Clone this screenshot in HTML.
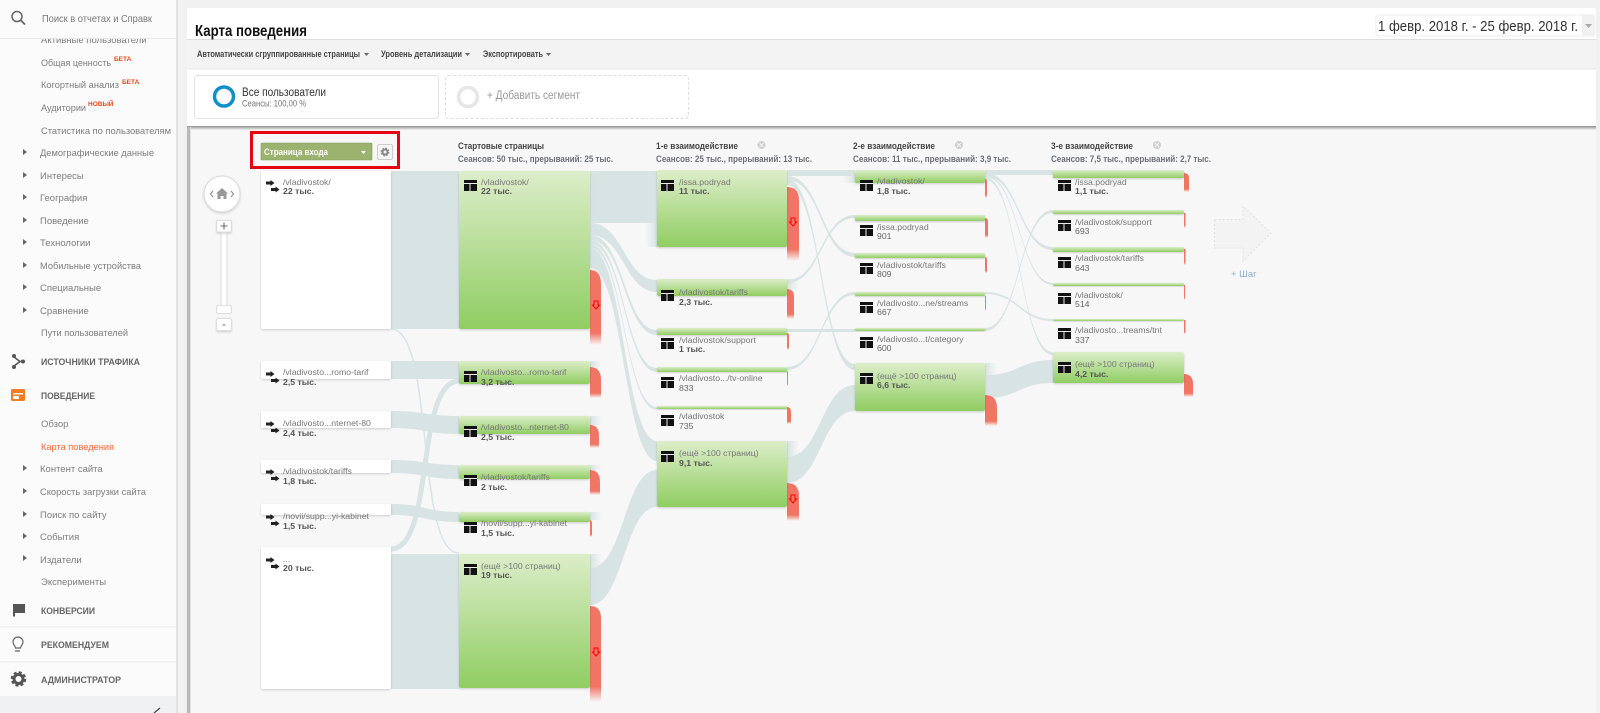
<!DOCTYPE html>
<html lang="ru">
<head>
<meta charset="utf-8">
<title>Карта поведения</title>
<style>
html,body{margin:0;padding:0;background:#f1f1f1;width:1600px;height:713px;overflow:hidden}
svg{display:block;position:absolute;left:0;top:0;font-family:"Liberation Sans","Noto Sans CJK SC",sans-serif;filter:blur(.35px)}
.m{font-size:9.5px;fill:#7d7d7d}
.s{font-size:9.5px;fill:#666;font-weight:bold}
.b{font-size:6.5px;fill:#e64a19;font-weight:bold}
.t{font-size:9px;fill:#444;font-weight:bold}
.h{font-size:9px;fill:#444;font-weight:bold}
.u{font-size:9px;fill:#6b7075;font-weight:bold}
.l{font-size:8.7px;fill:#777}
.v{font-size:8.7px;fill:#555;font-weight:bold}
.n{font-size:8.7px;fill:#666}
.g{fill:url(#gr);filter:url(#sh)}
.w{fill:#fff;filter:url(#sh)}
.f{fill:#d8e3e3}
.r{fill:url(#rd)}
.fr{fill:url(#fr)}
.fl{fill:url(#fl)}
</style>
</head>
<body>
<svg width="1600" height="713" viewBox="0 0 1600 713" xmlns="http://www.w3.org/2000/svg">
<defs>
<linearGradient id="gr" x1="0" y1="0" x2="0" y2="1"><stop offset="0" stop-color="#dcedc9"/><stop offset="1" stop-color="#90cd62"/></linearGradient>
<linearGradient id="rd" x1="0" y1="0" x2="0" y2="1"><stop offset="0" stop-color="#f07564"/><stop offset=".84" stop-color="#f07564"/><stop offset="1" stop-color="#f07564" stop-opacity="0"/></linearGradient>
<linearGradient id="tp" x1="0" y1="0" x2="0" y2="1"><stop offset="0" stop-color="#8f8f8f"/><stop offset="1" stop-color="#f2f2f2"/></linearGradient>
<linearGradient id="fr" x1="0" y1="0" x2="1" y2="0"><stop offset="0" stop-color="#d8e3e3"/><stop offset="1" stop-color="#d8e3e3" stop-opacity="0"/></linearGradient>
<linearGradient id="fl" x1="1" y1="0" x2="0" y2="0"><stop offset="0" stop-color="#d8e3e3"/><stop offset="1" stop-color="#d8e3e3" stop-opacity="0"/></linearGradient>
<filter id="sh" x="-5%" y="-20%" width="110%" height="150%"><feDropShadow dx="0" dy="1" stdDeviation="1" flood-color="#000" flood-opacity=".18"/></filter>
<g id="p"><rect width="13" height="11" fill="#111"/><rect y="3" width="13" height="1" fill="#eee"/><rect x="5.500" y="4" width="1" height="7" fill="#eee"/></g>
<g id="e" fill="#222"><path d="M0 1.500h4.500V0l4 3-4 3V4.500H0z"/><path d="M5 8h4.500V6.500l4 3-4 3V11H5z"/></g>
</defs>

<!-- sidebar -->
<rect x="0" y="0" width="176" height="713" fill="#fbfbfb"/>
<rect x="176" y="0" width="2" height="713" fill="#e2e2e2"/>
<circle cx="17" cy="16.500" r="5" fill="none" stroke="#666" stroke-width="1.500"/><path d="M20.500 20l4.500 4.500" stroke="#666" stroke-width="1.800"/>
<text x="42" y="22" font-size="10.500" fill="#777" textLength="110" lengthAdjust="spacingAndGlyphs">Поиск в отчетах и Справк</text>
<text class="m" x="41" y="43">Активные пользователи</text>
<rect x="0" y="28" width="176" height="10" fill="#fbfbfb"/>
<rect x="0" y="38" width="176" height="1" fill="#e6e6e6"/>
<text class="m" x="41" y="66" textLength="70" lengthAdjust="spacingAndGlyphs">Общая ценность</text><text class="b" x="114" y="61">БЕТА</text>
<text class="m" x="41" y="88" textLength="78" lengthAdjust="spacingAndGlyphs">Когортный анализ</text><text class="b" x="122" y="84">БЕТА</text>
<text class="m" x="41" y="111" textLength="45" lengthAdjust="spacingAndGlyphs">Аудитории</text><text class="b" x="88" y="106">НОВЫЙ</text>
<text class="m" x="41" y="134" textLength="130" lengthAdjust="spacingAndGlyphs">Статистика по пользователям</text>
<g fill="#666"><path d="M23 149l4 3-4 3zM23 172l4 3-4 3zM23 194l4 3-4 3zM23 217l4 3-4 3zM23 239l4 3-4 3zM23 262l4 3-4 3zM23 284l4 3-4 3zM23 307l4 3-4 3zM23 465l4 3-4 3zM23 488l4 3-4 3zM23 511l4 3-4 3zM23 533l4 3-4 3zM23 555l4 3-4 3z"/></g>
<text class="m" x="40" y="156" textLength="114" lengthAdjust="spacingAndGlyphs">Демографические данные</text>
<text class="m" x="40" y="179">Интересы</text>
<text class="m" x="40" y="201">География</text>
<text class="m" x="40" y="224">Поведение</text>
<text class="m" x="40" y="246">Технологии</text>
<text class="m" x="40" y="269" textLength="101" lengthAdjust="spacingAndGlyphs">Мобильные устройства</text>
<text class="m" x="40" y="291">Специальные</text>
<text class="m" x="40" y="314">Сравнение</text>
<text class="m" x="41" y="336" textLength="87" lengthAdjust="spacingAndGlyphs">Пути пользователей</text>
<text class="s" x="41" y="365" textLength="99" lengthAdjust="spacingAndGlyphs">ИСТОЧНИКИ ТРАФИКА</text>
<path d="M14 357l6 4.500-6 4.500M20 361.500h4" fill="none" stroke="#555" stroke-width="1.500"/><circle cx="14" cy="356" r="2" fill="#555"/><circle cx="14" cy="367" r="2" fill="#555"/><circle cx="23" cy="361.500" r="2" fill="#555"/>
<rect x="11" y="389" width="14" height="12" rx="1.500" fill="#f57c1f"/><rect x="13" y="393" width="10" height="1.500" fill="#fff"/><rect x="13" y="396" width="6" height="3" fill="#fff"/>
<text class="s" x="41" y="399" textLength="54" lengthAdjust="spacingAndGlyphs">ПОВЕДЕНИЕ</text>
<text class="m" x="41" y="427">Обзор</text>
<text class="m" x="41" y="450" style="fill:#f4693a" textLength="73" lengthAdjust="spacingAndGlyphs">Карта поведения</text>
<text class="m" x="40" y="472">Контент сайта</text>
<text class="m" x="40" y="495" textLength="106" lengthAdjust="spacingAndGlyphs">Скорость загрузки сайта</text>
<text class="m" x="40" y="518">Поиск по сайту</text>
<text class="m" x="40" y="540">События</text>
<text class="m" x="40" y="563">Издатели</text>
<text class="m" x="41" y="585">Эксперименты</text>
<path d="M13 604h12v9H15v3.500h-2z" fill="#555"/>
<text class="s" x="41" y="614" textLength="54" lengthAdjust="spacingAndGlyphs">КОНВЕРСИИ</text>
<rect x="0" y="626" width="176" height="1.500" fill="#efefef"/>
<path d="M15.500 648c0-2-2.500-3-2.500-6a5 5 0 0 1 10 0c0 3-2.500 4-2.500 6zM15 651h5" fill="none" stroke="#666" stroke-width="1.200"/>
<text class="s" x="41" y="648" textLength="68" lengthAdjust="spacingAndGlyphs">РЕКОМЕНДУЕМ</text>
<rect x="0" y="661" width="176" height="1.500" fill="#efefef"/>
<circle cx="18.500" cy="679" r="4.500" fill="none" stroke="#555" stroke-width="3"/><circle cx="18.500" cy="679" r="6.500" fill="none" stroke="#555" stroke-width="2.500" stroke-dasharray="3 2.100"/>
<text class="s" x="41" y="683" textLength="80" lengthAdjust="spacingAndGlyphs">АДМИНИСТРАТОР</text>
<rect x="0" y="696" width="176" height="17" fill="#eef0f2"/>
<path d="M154 713l6-5" stroke="#444" stroke-width="1.200"/>

<!-- header -->
<rect x="187" y="8" width="1409" height="31" fill="#fff"/>
<rect x="187" y="39" width="1409" height="1" fill="#dedede"/>
<rect x="187" y="40" width="1409" height="29" fill="#f3f3f3"/>
<rect x="187" y="69" width="1409" height="58" fill="#fff"/>
<rect x="187" y="68.500" width="1409" height="1" fill="#e6e6e6"/>
<text x="195" y="36" font-size="16" fill="#111" font-weight="bold" textLength="112" lengthAdjust="spacingAndGlyphs">Карта поведения</text>
<rect x="1376" y="15" width="219" height="21" rx="3" fill="#fff" stroke="#eee"/>
<rect x="1582" y="15" width="13" height="21" fill="#f1f1f1"/>
<path d="M1585 24h7l-3.500 4z" fill="#aaa"/>
<text x="1378" y="31" font-size="14.500" fill="#333" textLength="200" lengthAdjust="spacingAndGlyphs">1 февр. 2018 г. - 25 февр. 2018 г.</text>
<text class="t" x="197" y="57" textLength="163" lengthAdjust="spacingAndGlyphs">Автоматически сгруппированные страницы</text>
<path d="M364 53h5l-2.500 3z" fill="#666"/>
<text class="t" x="381" y="57" textLength="81" lengthAdjust="spacingAndGlyphs">Уровень детализации</text>
<path d="M465 53h5l-2.500 3z" fill="#666"/>
<text class="t" x="483" y="57" textLength="60" lengthAdjust="spacingAndGlyphs">Экспортировать</text>
<path d="M546 53h5l-2.500 3z" fill="#666"/>
<rect x="194.500" y="75.500" width="244" height="43" rx="3" fill="#fff" stroke="#e4e4e4"/>
<circle cx="224" cy="96.500" r="9.500" fill="none" stroke="#0f8fc7" stroke-width="3.500"/>
<text x="242" y="96" font-size="11.500" fill="#333" textLength="84" lengthAdjust="spacingAndGlyphs">Все пользователи</text>
<text x="242" y="106.500" font-size="9" fill="#777" textLength="64" lengthAdjust="spacingAndGlyphs">Сеансы: 100,00 %</text>
<rect x="445.500" y="75.500" width="243" height="43" rx="3" fill="#fff" stroke="#ddd" stroke-dasharray="3 2"/>
<circle cx="468" cy="97" r="9.500" fill="none" stroke="#e6e6e6" stroke-width="3.500"/>
<text x="487" y="99" font-size="11.500" fill="#999" textLength="93" lengthAdjust="spacingAndGlyphs">+ Добавить сегмент</text>

<!-- map area -->
<rect x="187" y="127" width="1409" height="586" fill="#f7f7f7"/>
<rect x="187" y="126" width="1409" height="4" fill="url(#tp)"/>
<rect x="187" y="127" width="3" height="586" fill="#b9b9b9"/>
<rect x="190" y="127" width="1" height="586" fill="#e2e2e2"/>

<!-- flows col0-1 -->
<rect class="f" x="391" y="171" width="68" height="158"/>
<path class="f" d="M391 361H459V379H391Z"/>
<path class="f" d="M391 411C425 411 425 416 459 416V434C425 434 425 428 391 428Z"/>
<path class="f" d="M391 460C425 460 425 465 459 465V479C425 479 425 473 391 473Z"/>
<path class="f" d="M391 504C425 504 425 512 459 512V522C425 522 425 515 391 515Z"/>
<rect class="f" x="391" y="554" width="68" height="135"/>
<path d="M391 549C435 549 415 381 459 381" fill="none" stroke="#d8e3e3" stroke-width="5"/>
<path d="M391 329C435 329 415 553 459 553" fill="none" stroke="#d8e3e3" stroke-width="1.500"/>

<!-- flows col1-2 -->
<rect class="f" x="590" y="171" width="67" height="52"/>
<path class="f" d="M590 223C624 223 624 280 657 280V292C624 292 624 235 590 235Z"/>
<path class="f" d="M590 235C624 235 624 330 657 330V335C624 335 624 240 590 240Z"/>
<path class="f" d="M590 240C624 240 624 368 657 368V372C624 372 624 244 590 244Z"/>
<path class="f" d="M590 244C624 244 624 407 657 407V410C624 410 624 248 590 248Z"/>
<path class="f" d="M590 248C624 248 624 441 657 441V461C624 461 624 268 590 268Z"/>
<path class="f" d="M590 568C624 568 624 470 657 470V507C624 507 624 605 590 605Z"/>

<!-- flows col2-3 -->
<rect class="f" x="787" y="170" width="68" height="6"/>
<path class="f" d="M787 176C821 176 821 253 855 253V257C821 257 821 180 787 180Z"/>
<path class="f" d="M787 179C821 179 821 364 855 364V370C821 370 821 185 787 185Z"/>
<path class="f" d="M787 280C821 280 821 215 855 215V218C821 218 821 283 787 283Z"/>
<path class="f" d="M787 329H855V332H787Z"/>
<path class="f" d="M787 367C821 367 821 292 855 292V295C821 295 821 370 787 370Z"/>
<path class="f" d="M787 457C821 457 821 385 855 385V411C821 411 821 483 787 483Z"/>

<!-- flows col3-4 -->
<rect class="f" x="985" y="170" width="68" height="5"/>
<path class="f" d="M985 173C1019 173 1019 247 1053 247V250C1019 250 1019 176 985 176Z"/>
<path class="f" d="M985 175C1019 175 1019 283 1053 283V285C1019 285 1019 177 985 177Z"/>
<path class="f" d="M985 177C1019 177 1019 352 1053 352V355C1019 355 1019 180 985 180Z"/>
<path class="f" d="M985 328C1019 328 1019 210 1053 210V213C1019 213 1019 331 985 331Z"/>
<path class="f" d="M985 292C1019 292 1019 319 1053 319V321C1019 321 1019 294 985 294Z"/>
<path class="f" d="M985 375C1019 375 1019 360 1053 360V383C1019 383 1019 398 985 398Z"/>

<!-- fading stubs -->
<rect class="fr" x="590" y="361" width="12" height="6"/>
<rect class="fr" x="590" y="416" width="12" height="9"/>
<rect class="fr" x="590" y="465" width="12" height="5"/>
<rect class="fr" x="590" y="512" width="12" height="8"/>
<rect class="fr" x="590" y="554" width="12" height="14"/>
<rect class="fr" x="787" y="279" width="12" height="10"/>
<rect class="fr" x="787" y="441" width="12" height="16"/>
<rect class="fr" x="985" y="363" width="12" height="12"/>
<rect class="fl" x="645" y="223" width="12" height="24"/>
<rect class="fl" x="843" y="175" width="12" height="8"/>

<!-- red exits -->
<path class="r" d="M590 270Q601 270 601 284V345H590Z"/>
<path class="r" d="M590 367Q601 367 601 380V398H590Z"/>
<path class="r" d="M590 425Q599 425 599 436V448H590Z"/>
<path class="r" d="M590 470Q600 470 600 482V495H590Z"/>
<path class="r" d="M590 520Q592 520 592 524V537H590Z"/>
<path class="r" d="M590 606Q601 606 601 618V702H590Z"/>
<path class="r" d="M787 187Q799 187 799 200V261H787Z"/>
<path class="r" d="M787 289Q794 289 794 297V319H787Z"/>
<path class="r" d="M787 333Q789 333 789 336V350H787Z"/>
<path class="r" d="M787 371Q788 371 788 373V386H787Z"/>
<path class="r" d="M787 407Q791 407 791 412V424H787Z"/>
<path class="r" d="M787 483Q799 483 799 496V521H787Z"/>
<path class="r" d="M985 179Q987 179 987 182V198H985Z"/>
<path class="r" d="M985 218Q988 218 988 222V238H985Z"/>
<path class="r" d="M985 257Q987 257 987 260V273H985Z"/>
<path class="r" d="M985 296H986V311H985Z"/>
<path class="r" d="M985 395Q997 395 997 408V426H985Z"/>
<path class="r" d="M1184 173Q1189 173 1189 178V192H1184Z"/>
<path class="r" d="M1184 213H1185.500V228H1184Z"/>
<path class="r" d="M1184 249H1185.500V265H1184Z"/>
<path class="r" d="M1184 285H1185V300H1184Z"/>
<path class="r" d="M1184 320H1185.500V334H1184Z"/>
<path class="r" d="M1184 374Q1193 374 1193 384V397H1184Z"/>
<g fill="none" stroke="#f00" stroke-width="1"><path d="M594 301h4v4h1.500l-3.500 4-3.500-4h1.500z"/><path d="M594 648h4v4h1.500l-3.500 4-3.500-4h1.500z"/><path d="M791 218h4v4h1.500l-3.500 4-3.500-4h1.500z"/><path d="M791 495h4v4h1.500l-3.500 4-3.500-4h1.500z"/></g>

<!-- nodes col0 -->
<rect class="w" x="261" y="171" width="130" height="158" rx="2"/>
<rect class="w" x="261" y="361" width="130" height="18" rx="2"/>
<rect class="w" x="261" y="411" width="130" height="17" rx="2"/>
<rect class="w" x="261" y="460" width="130" height="13" rx="2"/>
<rect class="w" x="261" y="504" width="130" height="11" rx="2"/>
<rect class="w" x="261" y="547" width="130" height="142" rx="2"/>
<use href="#e" x="266" y="180"/><use href="#e" x="266" y="371"/><use href="#e" x="266" y="421"/><use href="#e" x="266" y="469"/><use href="#e" x="266" y="514"/><use href="#e" x="266" y="557"/>
<text class="l" x="283" y="185">/vladivostok/</text><text class="v" x="283" y="194">22 тыс.</text>
<text class="l" x="283" y="375">/vladivosto...romo-tarif</text><text class="v" x="283" y="385">2,5 тыс.</text>
<text class="l" x="283" y="426">/vladivosto...nternet-80</text><text class="v" x="283" y="436">2,4 тыс.</text>
<text class="l" x="283" y="474">/vladivostok/tariffs</text><text class="v" x="283" y="484">1,8 тыс.</text>
<text class="l" x="283" y="519">/novii/supp...yi-kabinet</text><text class="v" x="283" y="529">1,5 тыс.</text>
<text class="l" x="283" y="562">...</text><text class="v" x="283" y="571">20 тыс.</text>

<!-- nodes col1 -->
<rect class="g" x="459" y="171" width="131" height="158" rx="2"/>
<rect class="g" x="459" y="361" width="131" height="23" rx="2"/>
<rect class="g" x="459" y="416" width="131" height="18" rx="2"/>
<rect class="g" x="459" y="465" width="131" height="14" rx="2"/>
<rect class="g" x="459" y="512" width="131" height="10" rx="2"/>
<rect class="g" x="459" y="554" width="131" height="134" rx="2"/>
<use href="#p" x="464" y="180"/><use href="#p" x="464" y="371"/><use href="#p" x="464" y="426"/><use href="#p" x="464" y="475"/><use href="#p" x="464" y="522"/><use href="#p" x="464" y="564"/>
<text class="l" x="481" y="185">/vladivostok/</text><text class="v" x="481" y="194">22 тыс.</text>
<text class="l" x="481" y="375">/vladivosto...romo-tarif</text><text class="v" x="481" y="385">3,2 тыс.</text>
<text class="l" x="481" y="430">/vladivosto...nternet-80</text><text class="v" x="481" y="440">2,5 тыс.</text>
<text class="l" x="481" y="480">/vladivostok/tariffs</text><text class="v" x="481" y="490">2 тыс.</text>
<text class="l" x="481" y="526">/novii/supp...yi-kabinet</text><text class="v" x="481" y="536">1,5 тыс.</text>
<text class="l" x="481" y="569">(ещё &gt;100 страниц)</text><text class="v" x="481" y="578">19 тыс.</text>

<!-- nodes col2 -->
<rect class="g" x="657" y="170" width="130" height="77" rx="2"/>
<rect class="g" x="657" y="279" width="130" height="17" rx="2"/>
<rect class="g" x="657" y="328" width="130" height="7" rx="1"/>
<rect class="g" x="657" y="367" width="130" height="5" rx="1"/>
<rect class="g" x="657" y="406" width="130" height="3" rx="1"/>
<rect class="g" x="657" y="441" width="130" height="66" rx="2"/>
<use href="#p" x="661" y="180"/><use href="#p" x="661" y="290"/><use href="#p" x="661" y="338"/><use href="#p" x="661" y="377"/><use href="#p" x="661" y="415"/><use href="#p" x="661" y="451"/>
<text class="l" x="679" y="185">/issa.podryad</text><text class="v" x="679" y="194">11 тыс.</text>
<text class="l" x="679" y="295">/vladivostok/tariffs</text><text class="v" x="679" y="305">2,3 тыс.</text>
<text class="l" x="679" y="343">/vladivostok/support</text><text class="v" x="679" y="352">1 тыс.</text>
<text class="l" x="679" y="381">/vladivosto.../tv-online</text><text class="n" x="679" y="391">833</text>
<text class="l" x="679" y="419">/vladivostok</text><text class="n" x="679" y="429">735</text>
<text class="l" x="679" y="456">(ещё &gt;100 страниц)</text><text class="v" x="679" y="466">9,1 тыс.</text>

<!-- nodes col3 -->
<rect class="g" x="855" y="170" width="130" height="13" rx="2"/>
<rect class="g" x="855" y="215" width="130" height="6" rx="1"/>
<rect class="g" x="855" y="253" width="130" height="5" rx="1"/>
<rect class="g" x="855" y="292" width="130" height="4" rx="1"/>
<rect class="g" x="855" y="328" width="130" height="3" rx="1"/>
<rect class="g" x="855" y="363" width="130" height="48" rx="2"/>
<use href="#p" x="860" y="180"/><use href="#p" x="860" y="225"/><use href="#p" x="860" y="263"/><use href="#p" x="860" y="302"/><use href="#p" x="860" y="337"/><use href="#p" x="860" y="373"/>
<text class="l" x="877" y="184">/vladivostok/</text><text class="v" x="877" y="194">1,8 тыс.</text>
<text class="l" x="877" y="230">/issa.podryad</text><text class="n" x="877" y="239">901</text>
<text class="l" x="877" y="268">/vladivostok/tariffs</text><text class="n" x="877" y="277">809</text>
<text class="l" x="877" y="306">/vladivosto...ne/streams</text><text class="n" x="877" y="315">667</text>
<text class="l" x="877" y="342">/vladivosto...t/category</text><text class="n" x="877" y="351">600</text>
<text class="l" x="877" y="379">(ещё &gt;100 страниц)</text><text class="v" x="877" y="388">6,6 тыс.</text>

<!-- nodes col4 -->
<rect class="g" x="1053" y="170" width="131" height="8" rx="1"/>
<rect class="g" x="1053" y="210" width="131" height="4" rx="1"/>
<rect class="g" x="1053" y="247" width="131" height="5" rx="1"/>
<rect class="g" x="1053" y="283" width="131" height="3" rx="1"/>
<rect class="g" x="1053" y="319" width="131" height="2" rx="1"/>
<rect class="g" x="1053" y="352" width="131" height="31" rx="2"/>
<use href="#p" x="1058" y="180"/><use href="#p" x="1058" y="220"/><use href="#p" x="1058" y="257"/><use href="#p" x="1058" y="293"/><use href="#p" x="1058" y="328"/><use href="#p" x="1058" y="362"/>
<text class="l" x="1075" y="185">/issa.podryad</text><text class="v" x="1075" y="194">1,1 тыс.</text>
<text class="l" x="1075" y="225">/vladivostok/support</text><text class="n" x="1075" y="234">693</text>
<text class="l" x="1075" y="261">/vladivostok/tariffs</text><text class="n" x="1075" y="271">643</text>
<text class="l" x="1075" y="298">/vladivostok/</text><text class="n" x="1075" y="307">514</text>
<text class="l" x="1075" y="333">/vladivosto...treams/tnt</text><text class="n" x="1075" y="343">337</text>
<text class="l" x="1075" y="367">(ещё &gt;100 страниц)</text><text class="v" x="1075" y="377">4,2 тыс.</text>

<!-- column headers -->
<text class="h" x="458" y="149" textLength="86" lengthAdjust="spacingAndGlyphs">Стартовые страницы</text>
<text class="u" x="458" y="162" textLength="155" lengthAdjust="spacingAndGlyphs">Сеансов: 50 тыс., прерываний: 25 тыс.</text>
<text class="h" x="656" y="149" textLength="82" lengthAdjust="spacingAndGlyphs">1-е взаимодействие</text>
<text class="u" x="656" y="162" textLength="156" lengthAdjust="spacingAndGlyphs">Сеансов: 25 тыс., прерываний: 13 тыс.</text>
<text class="h" x="853" y="149" textLength="82" lengthAdjust="spacingAndGlyphs">2-е взаимодействие</text>
<text class="u" x="853" y="162" textLength="158" lengthAdjust="spacingAndGlyphs">Сеансов: 11 тыс., прерываний: 3,9 тыс.</text>
<text class="h" x="1051" y="149" textLength="82" lengthAdjust="spacingAndGlyphs">3-е взаимодействие</text>
<text class="u" x="1051" y="162" textLength="160" lengthAdjust="spacingAndGlyphs">Сеансов: 7,5 тыс., прерываний: 2,7 тыс.</text>
<g fill="#cfcfcf"><circle cx="761.500" cy="145" r="4"/><circle cx="959" cy="145" r="4"/><circle cx="1157" cy="145" r="4"/></g>
<path d="M759.500 143l4 4m0-4l-4 4M957 143l4 4m0-4l-4 4M1155 143l4 4m0-4l-4 4" stroke="#f4f4f4" stroke-width="1"/>

<!-- add step arrow -->
<path d="M1214.500 219.500H1243V206L1271 233L1243 261V248H1214.500Z" fill="#f3f3f3" stroke="#e0e0e0" stroke-dasharray="2 2"/>
<text x="1231" y="277" font-size="9.500" fill="#8fb0cf">+ Шаг</text>

<!-- toolbar in map: highlight -->
<rect x="251.500" y="132.500" width="147" height="35" fill="none" stroke="#e30613" stroke-width="3"/>
<rect x="261" y="143" width="111" height="17" rx="1" fill="#9bb36f" stroke="#83995c" stroke-width=".6"/>
<text x="264" y="155" font-size="9.500" font-weight="bold" fill="#fff" textLength="64" lengthAdjust="spacingAndGlyphs">Страница входа</text>
<path d="M361 151h5l-2.500 3z" fill="#fff"/>
<rect x="377.500" y="144.500" width="15" height="15" rx="1.500" fill="#f5f5f5" stroke="#ccc"/>
<circle cx="385" cy="152" r="2.500" fill="none" stroke="#888" stroke-width="2"/><circle cx="385" cy="152" r="3.800" fill="none" stroke="#888" stroke-width="1.300" stroke-dasharray="1.700 1.300"/>

<!-- nav control -->
<circle cx="222" cy="194" r="18" fill="#fff" stroke="#d9d9d9" filter="url(#sh)"/>
<path d="M213 191l-2.500 3 2.500 3M231 191l2.500 3-2.500 3" fill="none" stroke="#888" stroke-width="1"/>
<path d="M222 188l-6 5.500h1.500v5.500h3v-3h3v3h3v-5.500h1.500z" fill="#999"/>
<rect x="221" y="232" width="6" height="75" fill="#fff" stroke="#ddd"/>
<rect x="216.500" y="220.500" width="15" height="11.500" rx="1.500" fill="#fff" stroke="#ddd" filter="url(#sh)"/>
<path d="M220.500 226h7M224 222.500v7" stroke="#666" stroke-width="1"/>
<rect x="216.500" y="305.500" width="15" height="8" rx="1.500" fill="#fff" stroke="#ddd"/>
<rect x="216.500" y="318.500" width="15" height="12" rx="1.500" fill="#fff" stroke="#ddd" filter="url(#sh)"/>
<path d="M222.500 325h3" stroke="#777" stroke-width="1"/>
</svg>
</body>
</html>
